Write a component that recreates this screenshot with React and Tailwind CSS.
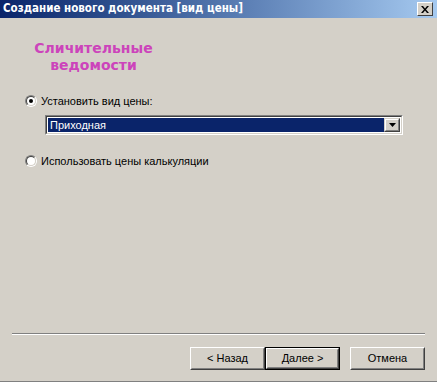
import React, { useState } from 'react'

const font = { fontFamily: '"Liberation Sans", Arial, sans-serif' }

function Radio({ checked }) {
  return (
    <span className="relative block w-[12px] h-[12px] shrink-0">
      <span className="absolute inset-0 rounded-full border border-t-[#808080] border-l-[#808080] border-r-white border-b-white" />
      <span className="absolute inset-[1px] rounded-full border border-t-[#404040] border-l-[#404040] border-r-[#D4D0C8] border-b-[#D4D0C8] bg-white" />
      {checked && <span className="absolute left-[4px] top-[4px] w-[4px] h-[4px] rounded-full bg-black" />}
    </span>
  )
}

function Button({ children, isDefault }) {
  return (
    <div className={`w-[75px] h-[23px] ${isDefault ? 'border border-black' : ''}`}>
      <div className="w-full h-full border border-t-white border-l-white border-r-[#404040] border-b-[#404040]">
        <div className="w-full h-full border border-t-[#D4D0C8] border-l-[#D4D0C8] border-r-[#808080] border-b-[#808080] flex items-center justify-center text-[11px] text-black">
          {children}
        </div>
      </div>
    </div>
  )
}

export default function App() {
  const [mode, setMode] = useState('price')

  return (
    <div className="w-[437px] h-[382px] bg-[#D4D0C8] flex flex-col border-b border-[#808080] overflow-hidden" style={font}>
      {/* Title bar */}
      <div className="h-[18px] shrink-0 flex items-center justify-between pl-[3px] pr-[4px] bg-gradient-to-r from-[#0A246A] to-[#A6CAF0]">
        <span className="text-white font-bold text-[11.5px] leading-none" style={{ fontFamily: '"DejaVu Sans Condensed", "DejaVu Sans", sans-serif' }}>
          Создание нового документа [вид цены]
        </span>
        <div className="w-[16px] h-[14px] border border-t-white border-l-white border-r-[#404040] border-b-[#404040] bg-[#D4D0C8] flex items-center justify-center">
          <svg width="8" height="7" viewBox="0 0 8 7">
            <path d="M0 0h2l2 2.5L6 0h2L5 3.5 8 7H6L4 4.5 2 7H0l3-3.5z" fill="black" />
          </svg>
        </div>
      </div>

      {/* Content */}
      <div className="flex-1 flex flex-col">
        <div className="w-[187px] mt-[22px] text-center text-[14px] font-bold leading-[17px] text-[#CC44BB]" style={{ fontFamily: '"DejaVu Sans", sans-serif' }}>
          <div>Сличительные</div>
          <div>ведомости</div>
        </div>

        <label className="flex items-center gap-[4px] ml-[25px] mt-[19px] text-[11px] leading-[16px] text-black cursor-default" onClick={() => setMode('price')}>
          <Radio checked={mode === 'price'} />
          <span>Установить вид цены:</span>
        </label>

        <div className="ml-[45px] mt-[6px] w-[358px] h-[20px] border border-t-[#808080] border-l-[#808080] border-r-white border-b-white">
          <div className="w-full h-full border border-t-[#404040] border-l-[#404040] border-r-[#D4D0C8] border-b-[#D4D0C8] bg-white flex p-[1px]">
            <div className="flex-1 bg-[#0A246A] text-white text-[11px] flex items-center pl-[2px]">Приходная</div>
            <div className="w-[16px] h-full border border-t-[#D4D0C8] border-l-[#D4D0C8] border-r-[#404040] border-b-[#404040] bg-[#D4D0C8]">
              <div className="w-full h-full border border-t-white border-l-white border-r-[#808080] border-b-[#808080] flex items-center justify-center">
                <svg width="7" height="4" viewBox="0 0 7 4"><path d="M0 0h7L3.5 4z" fill="black" /></svg>
              </div>
            </div>
          </div>
        </div>

        <label className="flex items-center gap-[4px] ml-[25px] mt-[18px] text-[11px] leading-[16px] text-black cursor-default" onClick={() => setMode('calc')}>
          <Radio checked={mode === 'calc'} />
          <span>Использовать цены калькуляции</span>
        </label>

        <div className="flex-1" />

        {/* Separator */}
        <div className="ml-[12px] w-[413px] border-t border-[#808080] border-b border-b-white" />

        <div className="flex justify-end items-center pr-[12px] mt-[12px] mb-[11px]">
          <Button>&lt; Назад</Button>
          <Button isDefault>Далее &gt;</Button>
          <div className="w-[10px]" />
          <Button>Отмена</Button>
        </div>
      </div>
    </div>
  )
}
